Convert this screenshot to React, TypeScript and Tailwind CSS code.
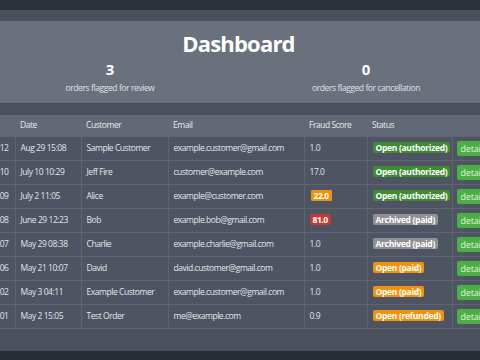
import React from 'react';

type Order = {
    id: string;
    date: string;
    customer: string;
    email: string;
    score: string;
    scoreFlag?: 'warn' | 'danger';
    status: string;
    statusTone: 'green' | 'gray' | 'orange';
};

const orders: Order[] = [
    { id: '1012', date: 'Aug 29 15:08', customer: 'Sample Customer', email: 'example.customer@gmail.com', score: '1.0', status: 'Open (authorized)', statusTone: 'green' },
    { id: '1010', date: 'July 10 10:29', customer: 'Jeff Fire', email: 'customer@example.com', score: '17.0', status: 'Open (authorized)', statusTone: 'green' },
    { id: '1009', date: 'July 2 11:05', customer: 'Alice', email: 'example@customer.com', score: '22.0', scoreFlag: 'warn', status: 'Open (authorized)', statusTone: 'green' },
    { id: '1008', date: 'June 29 12:23', customer: 'Bob', email: 'example.bob@gmail.com', score: '81.0', scoreFlag: 'danger', status: 'Archived (paid)', statusTone: 'gray' },
    { id: '1007', date: 'May 29 08:38', customer: 'Charlie', email: 'example.charlie@gmail.com', score: '1.0', status: 'Archived (paid)', statusTone: 'gray' },
    { id: '1006', date: 'May 21 10:07', customer: 'David', email: 'david.customer@gmail.com', score: '1.0', status: 'Open (paid)', statusTone: 'orange' },
    { id: '1002', date: 'May 3 04:11', customer: 'Example Customer', email: 'example.customer@gmail.com', score: '1.0', status: 'Open (paid)', statusTone: 'orange' },
    { id: '1001', date: 'May 2 15:05', customer: 'Test Order', email: 'me@example.com', score: '0.9', status: 'Open (refunded)', statusTone: 'orange' },
];

const toneClass = {
    green: 'bg-[#3f8a32]',
    gray: 'bg-[#8e9093]',
    orange: 'bg-[#f0920c]',
};

const cell = 'border border-[#5e6471] px-[5px] text-left font-normal whitespace-nowrap overflow-hidden';

const App: React.FC = () => {
    return (
        <div className="w-[480px] h-[360px] overflow-hidden bg-[#272c36] text-[#e3e5e9] font-['Open_Sans',sans-serif]">
            <div className="h-[10px] bg-[#2c313c]" />
            <div className="h-[11px] bg-[#4b515c]" />

            {/* Summary */}
            <div className="h-[82px] bg-[#6a717d] pt-[7px] overflow-hidden">
                <h1 className="text-center text-[22px] leading-[30px] font-bold text-white tracking-[-0.8px] -ml-[3px]">Dashboard</h1>
                <div className="grid grid-cols-2 w-[512px] -ml-[18px] mt-[2px]">
                    <div className="flex flex-col items-center">
                        <span className="text-[15px] leading-[19px] font-bold text-white">3</span>
                        <span className="text-[8.5px] leading-[12px] mt-[3px] text-[#dfe2e6] tracking-[-0.4px]">orders flagged for review</span>
                    </div>
                    <div className="flex flex-col items-center">
                        <span className="text-[15px] leading-[19px] font-bold text-white">0</span>
                        <span className="text-[8.5px] leading-[12px] mt-[3px] text-[#dfe2e6] tracking-[-0.4px]">orders flagged for cancellation</span>
                    </div>
                </div>
            </div>

            {/* Orders */}
            <div className="bg-[#4b515d] pt-[11px] pb-[22px] border-t border-[#454b56]">
                <table className="table-fixed border-collapse -ml-[30px] w-[530px] text-[8.5px] tracking-[-0.45px]">
                    <colgroup>
                        <col className="w-[45px]" />
                        <col className="w-[66px]" />
                        <col className="w-[87px]" />
                        <col className="w-[136px]" />
                        <col className="w-[63px]" />
                        <col className="w-[85px]" />
                        <col className="w-[48px]" />
                    </colgroup>
                    <thead>
                        <tr className="h-[21px] bg-[#626875] text-[#e6e8eb]">
                            <th className={`${cell} border-t-0 border-x-0`} />
                            <th className={`${cell} border-t-0 border-x-0 font-bold`}>Date</th>
                            <th className={`${cell} border-t-0 border-x-0 font-bold`}>Customer</th>
                            <th className={`${cell} border-t-0 border-x-0 font-bold`}>Email</th>
                            <th className={`${cell} border-t-0 border-x-0 font-bold`}>Fraud Score</th>
                            <th className={`${cell} border-t-0 border-x-0 font-bold`}>Status</th>
                            <th className={`${cell} border-t-0 border-x-0`} />
                        </tr>
                    </thead>
                    <tbody>
                        {orders.map((o) => (
                            <tr key={o.id} className="h-[24px] bg-[#4e5461]">
                                <td className={`${cell} border-l-0`}>
                                    <span className="block text-right pr-[1px]">{o.id}</span>
                                </td>
                                <td className={cell}>{o.date}</td>
                                <td className={cell}>{o.customer}</td>
                                <td className={cell}>{o.email}</td>
                                <td className={cell}>
                                    {o.scoreFlag === 'warn' ? (
                                        <span className="inline-block px-[3px] leading-[11px] rounded-[2px] bg-[#f0920c] text-white font-bold border border-[#3f5586]">{o.score}</span>
                                    ) : o.scoreFlag === 'danger' ? (
                                        <span className="inline-block px-[3px] leading-[11px] rounded-[2px] bg-[#c13a33] text-white font-bold">{o.score}</span>
                                    ) : (
                                        o.score
                                    )}
                                </td>
                                <td className={cell}>
                                    <span className={`inline-block px-[3px] leading-[11px] rounded-[2px] text-white font-bold text-[8.5px] tracking-[-0.3px] ${toneClass[o.statusTone]}`}>{o.status}</span>
                                </td>
                                <td className={`${cell} border-r-0 pl-[4px]`}>
                                    <span className="inline-block h-[15px] leading-[15px] px-[4px] rounded-[2px] bg-[#4caf45] text-[#e3f4df] text-[9px] tracking-[-0.2px]">details</span>
                                </td>
                            </tr>
                        ))}
                    </tbody>
                </table>
            </div>
        </div>
    );
};

export default App;
